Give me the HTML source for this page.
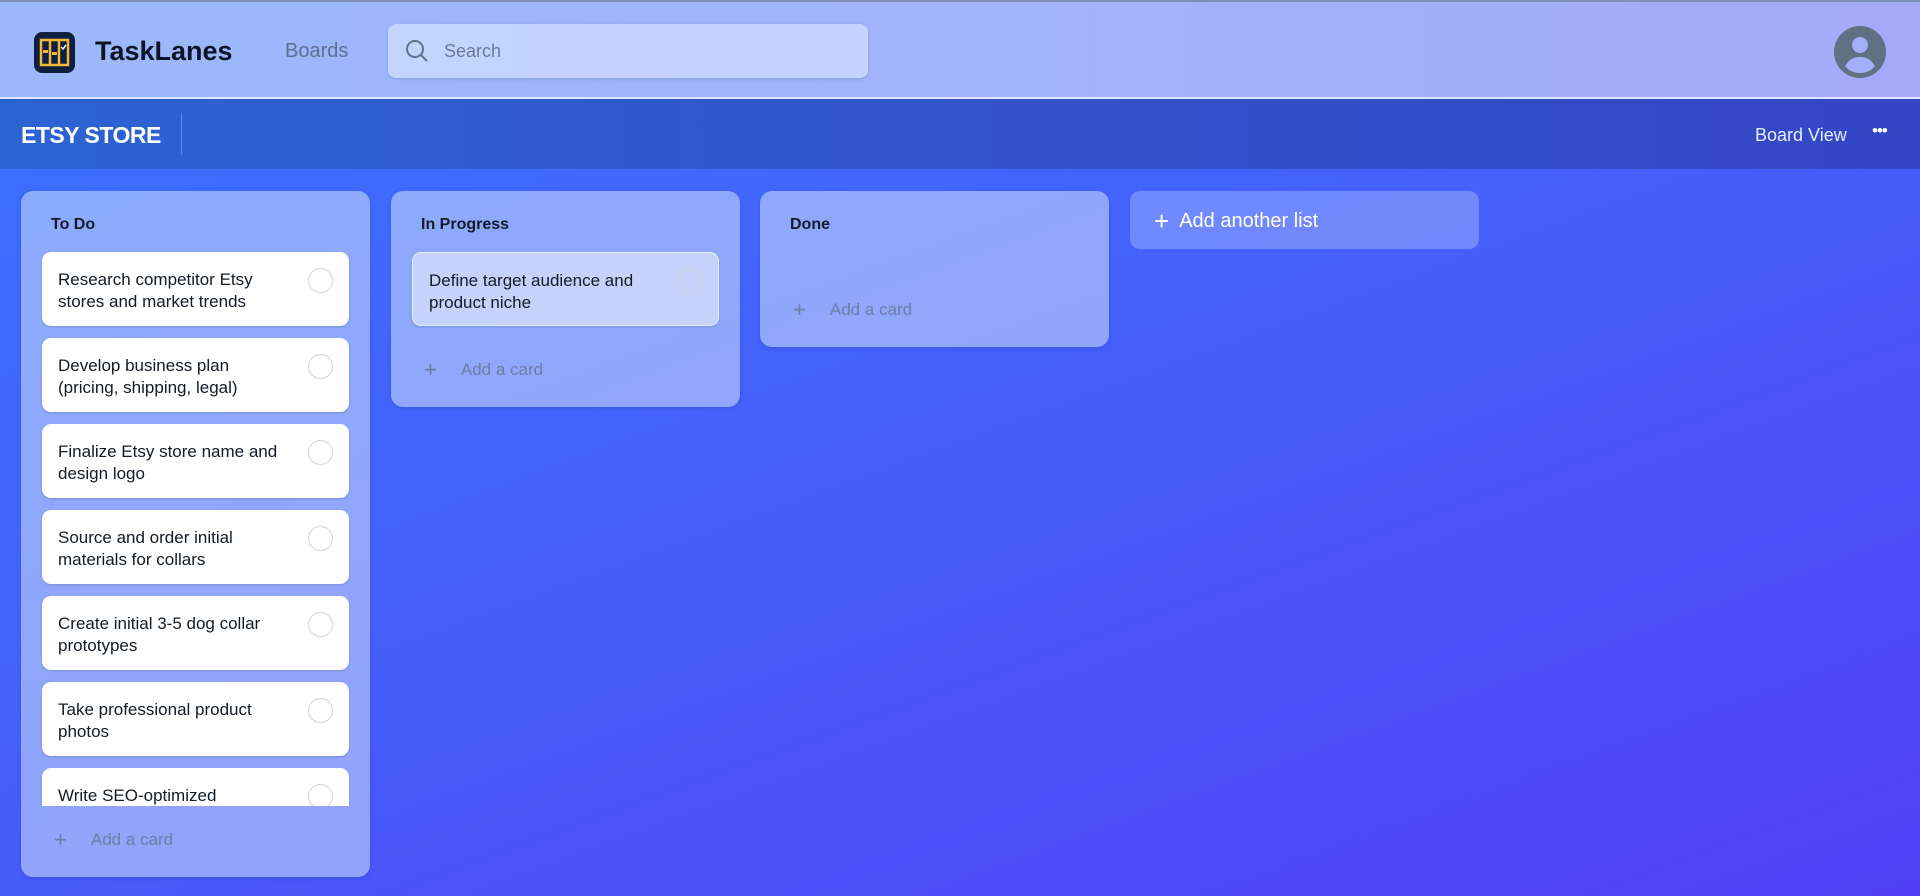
<!DOCTYPE html>
<html><head><meta charset="utf-8"><style>
*{box-sizing:border-box;margin:0;padding:0}
body{width:1920px;height:896px;overflow:hidden;font-family:"Liberation Sans",sans-serif;background:linear-gradient(160deg,#3a72ff 0%,#4560fb 45%,#5140f3 100%);position:relative}
.hdr{position:absolute;left:0;top:0;width:1920px;height:99px;background:linear-gradient(90deg,#9bb9fb,#a1b1fb 60%,#a5aaf8);border-top:2px solid #7e90b8;border-bottom:2px solid #dfe6ff}
.logo{position:absolute;left:34px;top:30px;width:41px;height:41px;background:#0f1f3f;border-radius:8px}
.brand{position:absolute;left:95px;top:34px;font-size:27px;font-weight:bold;color:#0d1526}
.boards{position:absolute;left:285px;top:38px;font-size:20px;color:#5e7090}
.search{position:absolute;left:388px;top:22px;width:480px;height:54px;background:rgba(220,232,255,.6);border-radius:8px;box-shadow:0 1px 3px rgba(0,0,0,.12)}
.search span{position:absolute;left:56px;top:17px;font-size:18px;color:#6b7b96}
.bar{position:absolute;left:0;top:99px;width:1920px;height:70px;background:linear-gradient(90deg,#2c63d2,#3450c9 60%,#3546c6)}
.bar .t{position:absolute;left:21px;top:23px;font-size:23px;font-weight:bold;color:#fff;letter-spacing:-0.5px}
.bar .div{position:absolute;left:181px;top:14px;width:1px;height:42px;background:rgba(255,255,255,.25)}
.bar .bv{position:absolute;left:1755px;top:26px;font-size:18px;color:#e6ecff}
.bar .dots{position:absolute;left:1872px;top:22px;font-size:17px;color:#fff;letter-spacing:-1px}
.list{position:absolute;top:191px;width:349px;background:rgba(190,210,250,.62);border-radius:12px;box-shadow:0 1px 4px rgba(0,0,0,.12)}
.lt{position:absolute;left:30px;top:25px;font-size:16px;font-weight:bold;color:#141b2b}
.card{position:absolute;left:21px;width:307px;height:74px;background:#fff;border-radius:9px;box-shadow:0 1px 2px rgba(0,0,0,.15);padding:17px 62px 0 16px;font-size:17px;line-height:22px;color:#131a28}
.card i{position:absolute;right:16px;top:16px;width:25px;height:25px;border:1px solid #cfd4dc;border-radius:50%}
.add{position:absolute;left:33px;font-size:17px;color:#6c7ea6}
.add b{font-weight:normal;font-size:22px;margin-right:24px;vertical-align:-2px}
</style></head><body>
<div class="hdr">
 <div class="logo"><svg width="41" height="41" viewBox="0 0 41 41"><rect x="7" y="8" width="27" height="25" fill="none" stroke="#f2b83a" stroke-width="2.5"/><line x1="16" y1="8" x2="16" y2="33" stroke="#f2b83a" stroke-width="2.5"/><line x1="25" y1="8" x2="25" y2="33" stroke="#f2b83a" stroke-width="2.5"/><rect x="9" y="18" width="5" height="3" fill="#f2b83a"/><rect x="18" y="20" width="5" height="3" fill="#f2b83a"/><path d="M27 15l2 2 3-4" stroke="#fff" stroke-width="1.5" fill="none"/></svg></div>
 <div class="brand">TaskLanes</div>
 <div class="boards">Boards</div>
 <div class="search"><svg style="position:absolute;left:16px;top:14px" width="26" height="26" viewBox="0 0 26 26"><circle cx="11" cy="11" r="8" fill="none" stroke="#64728a" stroke-width="2"/><line x1="17" y1="17" x2="23" y2="23" stroke="#64728a" stroke-width="2"/></svg><span>Search</span></div>
 <svg style="position:absolute;left:1834px;top:24px" width="52" height="52" viewBox="0 0 52 52"><circle cx="26" cy="26" r="26" fill="#5f7182"/><circle cx="26" cy="19" r="8" fill="#a3b0f9"/><path d="M11 40c4-7 9-9 15-9s11 2 15 9c-4 5-9 7-15 7s-11-2-15-7z" fill="#a3b0f9"/></svg>
</div>
<div class="bar"><div class="t">ETSY STORE</div><div class="div"></div><div class="bv">Board View</div><div class="dots">•••</div></div>

<div class="list" style="left:21px;height:686px">
 <div class="lt">To Do</div>
 <div style="position:absolute;left:0;top:61px;width:349px;height:554px;overflow:hidden">
  <div class="card" style="top:0">Research competitor Etsy stores and market trends<i></i></div>
  <div class="card" style="top:86px">Develop business plan (pricing, shipping, legal)<i></i></div>
  <div class="card" style="top:172px">Finalize Etsy store name and design logo<i></i></div>
  <div class="card" style="top:258px">Source and order initial materials for collars<i></i></div>
  <div class="card" style="top:344px">Create initial 3-5 dog collar prototypes<i></i></div>
  <div class="card" style="top:430px">Take professional product photos<i></i></div>
  <div class="card" style="top:516px">Write SEO-optimized<br>product descriptions<i></i></div>
 </div>
 <div class="add" style="top:636px"><b>+</b>Add a card</div>
</div>

<div class="list" style="left:391px;height:216px">
 <div class="lt">In Progress</div>
 <div class="card" style="top:61px;background:rgba(215,225,250,.75);border:1px solid rgba(255,255,255,.6)">Define target audience and product niche<i></i></div>
 <div class="add" style="top:166px"><b>+</b>Add a card</div>
</div>

<div class="list" style="left:760px;height:156px">
 <div class="lt">Done</div>
 <div class="add" style="top:106px"><b>+</b>Add a card</div>
</div>

<div style="position:absolute;left:1130px;top:191px;width:349px;height:58px;background:rgba(150,170,255,.55);border-radius:10px;color:#fff;font-size:20px;padding:15px 0 0 24px"><b style="font-weight:normal;font-size:26px;vertical-align:-3px;margin-right:10px">+</b>Add another list</div>
</body></html>
